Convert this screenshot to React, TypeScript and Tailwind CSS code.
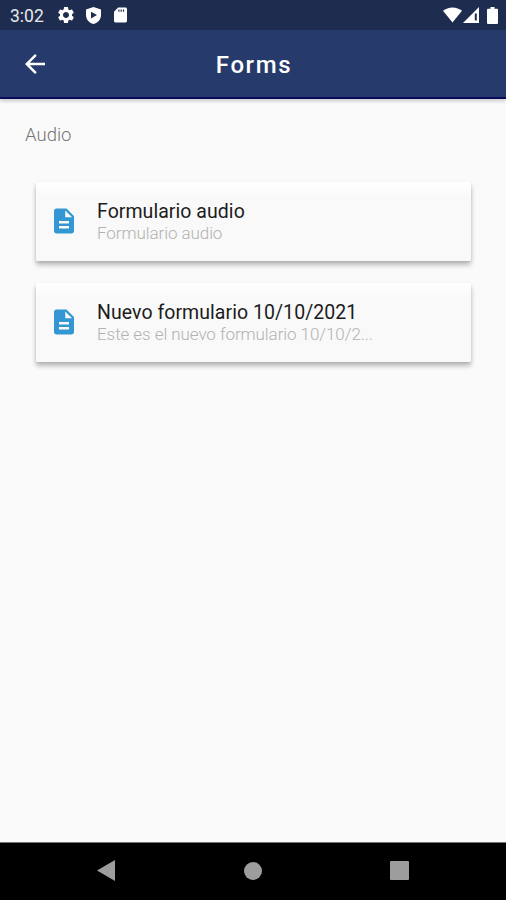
import {
  MdArrowBack,
  MdDescription,
  MdSettings,
} from 'react-icons/md';

type Form = {
  title: string;
  description: string;
};

const forms: Form[] = [
  { title: 'Formulario audio', description: 'Formulario audio' },
  { title: 'Nuevo formulario 10/10/2021', description: 'Este es el nuevo formulario 10/10/2...' },
];

function StatusBar() {
  return (
    <div className="flex h-[30px] shrink-0 items-center bg-[#1e2d4f] pl-[10px] pr-[8px] text-white">
      <span className="w-[46px] pt-[3px] text-[17.5px] leading-none text-[#e8e8e8]">3:02</span>
      <MdSettings className="size-[20px]" />
      {/* Play Protect shield */}
      <svg className="ml-[10px] h-[17px] w-[15px]" viewBox="0 0 15 17" fill="currentColor">
        <path
          fillRule="evenodd"
          d="M7.5 0 15 2.6V8c0 4.500-3 7.600-7.500 9C3 15.600 0 12.500 0 8V2.600L7.500 0ZM5 4.800v6.600l6-3.300-6-3.300Z"
        />
      </svg>
      {/* SD card */}
      <svg className="ml-[13px] h-[16px] w-[13px]" viewBox="0 0 14 16" fill="currentColor">
        <path
          fillRule="evenodd"
          d="M4.500 0H12.500A1.500 1.500 0 0 1 14 1.500v13a1.500 1.500 0 0 1-1.500 1.500h-11A1.500 1.500 0 0 1 0 14.500V4.500L4.500 0ZM4.600 2v2.500h1.300V2H4.600Zm2.500 0v2.500h1.300V2H7.100Zm2.500 0v2.500h1.300V2H9.600Z"
        />
      </svg>
      <div className="ml-auto flex items-center">
        <svg className="h-[16px] w-[19px]" viewBox="0 0 20 16" fill="currentColor">
          <path d="M0 3.600C2.700 1.300 6.200 0 10 0s7.300 1.300 10 3.600L10 16 0 3.600Z" />
        </svg>
        <svg className="ml-px h-[16px] w-[16px]" viewBox="0 0 16 16" fill="currentColor">
          <path fillRule="evenodd" d="M16 0v16H0L16 0Zm-4.200 6.500v7h2v-7h-2Z" />
        </svg>
        <svg className="ml-[8px] h-[17px] w-[11px]" viewBox="0 0 11 17" fill="currentColor">
          <path d="M3.500 0h4v1.800H10a1 1 0 0 1 1 1V16a1 1 0 0 1-1 1H1a1 1 0 0 1-1-1V2.800a1 1 0 0 1 1-1h2.500V0Z" />
        </svg>
      </div>
    </div>
  );
}

function FormCard({ title, description }: Form) {
  return (
    <div className="flex h-[79px] items-center rounded-[2px] bg-linear-to-b from-white to-[#f9f9f9] to-20% pl-[12.5px] shadow-[0_4px_5px_rgba(0,0,0,0.25),0_1px_3px_rgba(0,0,0,0.1)]">
      <MdDescription className="mb-[2px] size-[30px] shrink-0 text-[#3397d3]" />
      <div className="ml-[18.5px] min-w-0 pt-[2px]">
        <p className="text-[19.5px] leading-[22px] tracking-[0.05px] whitespace-nowrap text-[#1c1c1c]">{title}</p>
        <p className="text-[17px] leading-[21px] font-light tracking-[-0.07px] whitespace-nowrap text-[#b2b2b2]">{description}</p>
      </div>
    </div>
  );
}

function NavBar() {
  return (
    <div className="flex h-[58px] shrink-0 items-center justify-between border-t border-[#777777] bg-black px-[97px] pb-[2px] text-[#9d9d9d]">
      <svg className="h-[21px] w-[18px]" viewBox="0 0 18 21" fill="currentColor">
        <path d="M18 0v21L0 10.500 18 0Z" />
      </svg>
      <div className="size-[18px] rounded-full bg-[#9d9d9d]" />
      <div className="size-[19px] rounded-[1px] bg-[#9d9d9d]" />
    </div>
  );
}

export default function App() {
  return (
    <div className="flex h-[900px] w-[506px] flex-col overflow-hidden bg-[#fafafa] font-['Roboto',sans-serif]">
      <StatusBar />
      <header className="z-10 grid h-[69px] shrink-0 grid-cols-[1fr_auto_1fr] items-center border-b-2 border-[#0c0a5c] bg-[#263b6b] text-white shadow-[0_2px_4px_rgba(0,0,0,0.2)]">
        <MdArrowBack className="ml-[20px] mt-px size-[30px]" />
        <h1 className="pl-[2px] pt-[2px] text-[24px] leading-none font-medium tracking-[1.6px]">Forms</h1>
      </header>
      <main className="flex-1">
        <h2 className="ml-[25px] mt-[24px] text-[18.5px] leading-[24px] font-[350] text-[#757575]">Audio</h2>
        <div className="mt-[35px] ml-[36px] flex w-[435px] flex-col gap-[22px]">
          {forms.map((form) => (
            <FormCard key={form.title} {...form} />
          ))}
        </div>
      </main>
      <NavBar />
    </div>
  );
}
